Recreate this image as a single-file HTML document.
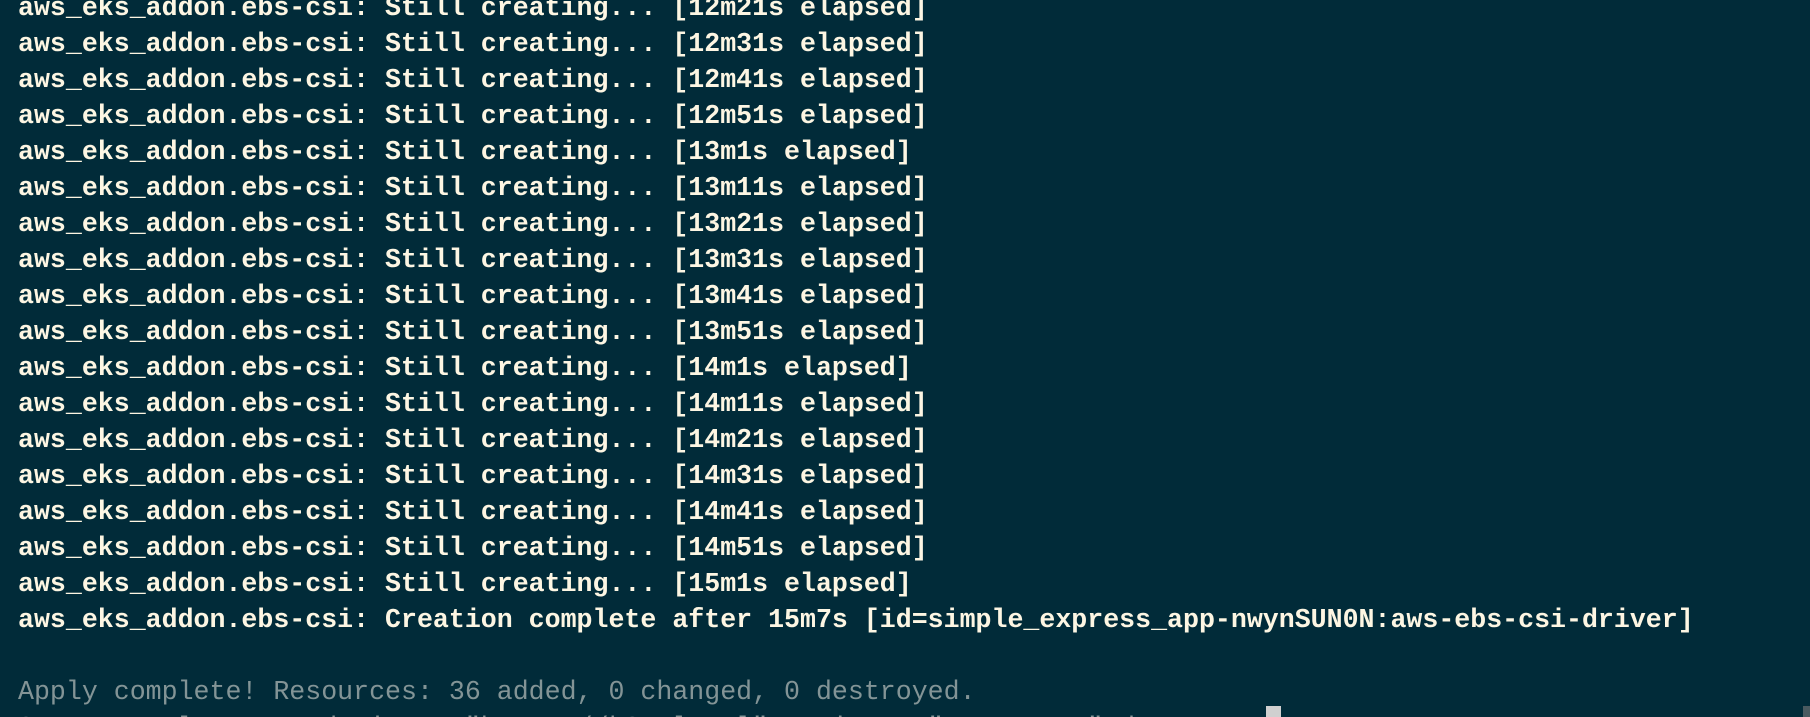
<!DOCTYPE html>
<html><head><meta charset="utf-8"><style>
html,body{margin:0;padding:0;width:1810px;height:717px;overflow:hidden;background:#012b39;}
#w{position:relative;width:1810px;height:717px;overflow:hidden;background:#012b39;}
.t{position:absolute;left:18px;top:-10px;font-family:"Liberation Mono",monospace;font-size:26.6px;line-height:36px;font-weight:bold;color:#fdf6e3;white-space:pre;}
.g{color:#839496;font-weight:normal;}
.cur{position:absolute;left:1266px;top:706px;width:15px;height:11px;background:#d0d0d0;}
.sb{position:absolute;left:1803px;top:706px;width:7px;height:11px;background:#4a5a60;}
</style></head><body><div id="w">
<div class="t">aws_eks_addon.ebs-csi: Still creating... [12m21s elapsed]
aws_eks_addon.ebs-csi: Still creating... [12m31s elapsed]
aws_eks_addon.ebs-csi: Still creating... [12m41s elapsed]
aws_eks_addon.ebs-csi: Still creating... [12m51s elapsed]
aws_eks_addon.ebs-csi: Still creating... [13m1s elapsed]
aws_eks_addon.ebs-csi: Still creating... [13m11s elapsed]
aws_eks_addon.ebs-csi: Still creating... [13m21s elapsed]
aws_eks_addon.ebs-csi: Still creating... [13m31s elapsed]
aws_eks_addon.ebs-csi: Still creating... [13m41s elapsed]
aws_eks_addon.ebs-csi: Still creating... [13m51s elapsed]
aws_eks_addon.ebs-csi: Still creating... [14m1s elapsed]
aws_eks_addon.ebs-csi: Still creating... [14m11s elapsed]
aws_eks_addon.ebs-csi: Still creating... [14m21s elapsed]
aws_eks_addon.ebs-csi: Still creating... [14m31s elapsed]
aws_eks_addon.ebs-csi: Still creating... [14m41s elapsed]
aws_eks_addon.ebs-csi: Still creating... [14m51s elapsed]
aws_eks_addon.ebs-csi: Still creating... [15m1s elapsed]
aws_eks_addon.ebs-csi: Creation complete after 15m7s [id=simple_express_app-nwynSUN0N:aws-ebs-csi-driver]

<span class="g">Apply complete! Resources: 36 added, 0 changed, 0 destroyed.</span>
<span class="g">Outputs: cluster_endpoint = "https://k8s.local" region = "us-east-1" d</span></div>
<div class="cur"></div><div class="sb"></div>
</div></body></html>
